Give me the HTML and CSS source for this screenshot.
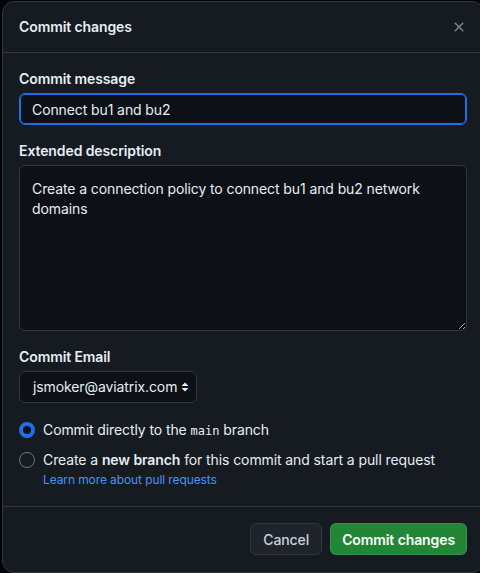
FILE: index.html
```html
<!DOCTYPE html>
<html>
<head>
<meta charset="utf-8">
<link rel="stylesheet" href="styles.css">
</head>
<body>
<div class="dialog">
  <div class="header">
    <h1 class="title">Commit changes</h1>
    <button class="close" aria-label="Close">
      <svg width="16" height="16" viewBox="0 0 16 16"><path d="M3.72 3.72a.75.75 0 0 1 1.06 0L8 6.94l3.22-3.22a.75.75 0 1 1 1.06 1.06L9.06 8l3.22 3.22a.75.75 0 1 1-1.06 1.06L8 9.06l-3.22 3.22a.75.75 0 0 1-1.06-1.06L6.94 8 3.72 4.78a.75.75 0 0 1 0-1.06Z" fill="currentColor"/></svg>
    </button>
  </div>
  <div class="body">
    <div class="group">
      <label class="label">Commit message</label>
      <input class="input focused" type="text" value="Connect bu1 and bu2">
    </div>
    <div class="group">
      <label class="label">Extended description</label>
      <textarea class="textarea">Create a connection policy to connect bu1 and bu2 network domains</textarea>
    </div>
    <div class="group">
      <label class="label">Commit Email</label>
      <div class="select">
        <span>jsmoker@aviatrix.com</span>
        <svg width="12" height="16" viewBox="0 0 12 16"><path d="M6 3.5 9.5 7h-7Z M6 12.5 2.5 9h7Z" fill="currentColor"/></svg>
      </div>
    </div>
    <div class="radios">
      <div class="radio-row">
        <span class="radio checked"></span>
        <span class="radio-text">Commit directly to the <code class="mono">main</code> branch</span>
      </div>
      <div class="radio-row">
        <span class="radio"></span>
        <div class="radio-col">
          <span class="radio-text">Create a <strong>new branch</strong> for this commit and start a pull request</span>
          <a class="link" href="#">Learn more about pull requests</a>
        </div>
      </div>
    </div>
  </div>
  <div class="footer">
    <button class="btn">Cancel</button>
    <button class="btn primary">Commit changes</button>
  </div>
</div>
</body>
</html>
```
FILE: styles.css
```css
html, body {
  margin: 0;
  padding: 0;
  background: #010409;
  overflow: hidden;
  height: 573px;
}
body {
  font-family: Inter, "Liberation Sans", sans-serif;
  color: #e6edf3;
  font-size: 14px;
  line-height: 20px;
  letter-spacing: -0.1px;
}
.dialog {
  box-sizing: border-box;
  width: 482px;
  margin: 1px 0 0 2px;
  height: 572px;
  background: #161b22;
  border: 1px solid #30363d;
  border-radius: 12px;
  display: flex;
  flex-direction: column;
}
.header {
  height: 50px;
  display: flex;
  align-items: center;
  justify-content: space-between;
  padding: 0 8px 0 16px;
  border-bottom: 1px solid #30363d;
}
.title {
  margin: 0;
  font-size: 14px;
  font-weight: 600;
  line-height: 20px;
}
.close {
  width: 32px;
  height: 32px;
  border: 0;
  background: transparent;
  color: #7d8590;
  display: flex;
  align-items: center;
  justify-content: center;
  padding: 0;
}
.body {
  padding: 16px 16px 16px;
  display: flex;
  flex-direction: column;
  gap: 16px;
  border-bottom: 1px solid #30363d;
}
.group {
  display: flex;
  flex-direction: column;
}
.label {
  font-weight: 600;
  line-height: 20px;
  margin-bottom: 4px;
}
.input, .textarea {
  box-sizing: border-box;
  width: 100%;
  font-family: inherit;
  font-size: 14px;
  line-height: 20px;
  letter-spacing: -0.1px;
  color: #e6edf3;
  background: #0d1117;
  border: 1px solid #30363d;
  border-radius: 6px;
  padding: 5px 12px;
  margin: 0;
  outline: none;
}
.input {
  height: 32px;
}
.input.focused {
  border-color: #1f6feb;
  box-shadow: inset 0 0 0 1px #1f6feb;
}
.textarea {
  height: 166px;
  padding: 13px 12px;
  resize: vertical;
  display: block;
}
.select {
  box-sizing: border-box;
  align-self: flex-start;
  height: 32px;
  display: flex;
  align-items: center;
  gap: 2px;
  padding: 0 5px 0 13px;
  background: #0d1117;
  border: 1px solid #30363d;
  border-radius: 6px;
}
.select svg {
  color: #e6edf3;
}
.radios {
  display: flex;
  flex-direction: column;
  gap: 9px;
  padding-top: 1px;
}
.radio-row {
  display: flex;
  align-items: flex-start;
  gap: 8px;
}
.radio {
  box-sizing: border-box;
  width: 16px;
  height: 16px;
  margin-top: 2px;
  border-radius: 50%;
  border: 1px solid #6e7681;
  flex: none;
}
.radio.checked {
  border: 4px solid #1f6feb;
  background: #0d1117;
}
.radio-col {
  display: flex;
  flex-direction: column;
}
.radio-text strong {
  font-weight: 600;
}
.mono {
  font-family: "DejaVu Sans Mono", "Liberation Mono", monospace;
  font-size: 12px;
  letter-spacing: 0;
}
.link {
  color: #4493f8;
  font-size: 12px;
  line-height: 20px;
  text-decoration: none;
}
.footer {
  display: flex;
  justify-content: flex-end;
  gap: 8px;
  padding: 16px;
}
.btn {
  box-sizing: border-box;
  height: 32px;
  padding: 0 12px;
  font-family: inherit;
  font-size: 14px;
  font-weight: 500;
  letter-spacing: -0.1px;
  color: #c9d1d9;
  background: #1f242c;
  border: 1px solid #30363d;
  border-radius: 6px;
}
.btn.primary {
  padding: 0 11px;
  background: #238636;
  border-color: rgba(240,246,252,0.1);
  color: #ffffff;
  font-weight: 600;
}
```
